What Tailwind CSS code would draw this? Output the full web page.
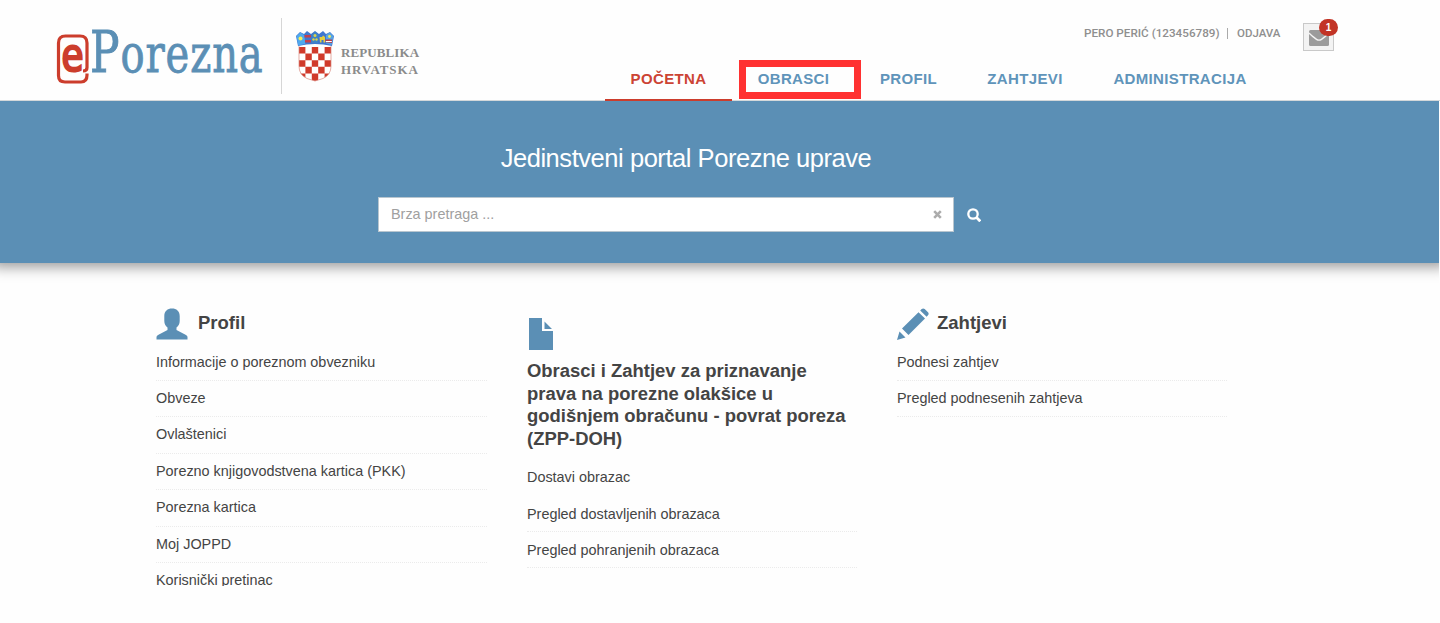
<!DOCTYPE html>
<html lang="hr">

<head>
  <meta charset="UTF-8">
  <meta name="viewport" content="width=device-width, initial-scale=1.0">
  <title>ePorezna</title>
  <script src="https://cdn.jsdelivr.net/npm/@tailwindcss/browser@4"></script>
</head>

<body class="h-[623px] overflow-hidden bg-[#fefefe] font-['Liberation_Sans',Arial,sans-serif] text-[#444]">
  <header class="flex h-[101px] items-start border-b border-[#d4d8da]">
    <!-- Logo -->
    <svg class="ml-[50px] h-[100px] w-[220px] shrink-0" viewBox="50 0 220 100">
      <path d="M87 73.500v1.500q0 7-6 7H65q-6.500 0-6.500-6.500V43q0-7 7-7H80q7 0 7 7v24.500q0 3.500-4 3.500" fill="none" stroke="#cc3d2c" stroke-width="3.200" />
      <text transform="translate(60.800 71.500) scale(.78 1)" font-family="DejaVu Sans Mono" font-weight="bold" font-size="50" fill="#cc3d2c">e</text>
      <text transform="translate(90 71.500) scale(.77 1)" font-family="DejaVu Serif" fill="#5b8fb5" stroke="#5b8fb5" stroke-width=".9" letter-spacing="1.200"><tspan font-size="57">P</tspan><tspan font-size="52">orezna</tspan></text>
    </svg>
    <div class="mt-[18px] ml-[11px] h-[76px] w-px shrink-0 bg-[#d6d6d6]"></div>
    <!-- Grb -->
    <svg class="mt-[30px] ml-[14px] h-[52px] w-[38px] shrink-0" viewBox="296 30 38 52">
      <defs>
        <clipPath id="shield"><path d="M299 46h32v20q0 9-8 12.500l-8 2.500-8-2.500q-8-3.500-8-12.500z" /></clipPath>
      </defs>
      <g clip-path="url(#shield)">
        <path fill="#fff" d="M299 46h32v36h-32z" />
        <path fill="#d03a2b" d="M299 47h6.400v6.600H299zM311.800 47h6.400v6.600h-6.400zM324.600 47h6.400v6.600h-6.400zM305.400 53.600h6.400v6.600h-6.400zM318.200 53.600h6.400v6.600h-6.400zM299 60.200h6.400v6.600H299zM311.800 60.200h6.400v6.600h-6.400zM324.600 60.200h6.400v6.600h-6.400zM305.400 66.800h6.400v6.600h-6.400zM318.200 66.800h6.400v6.600h-6.400zM299 73.400h6.400V80H299zM311.800 73.400h6.400V82h-6.400zM324.600 73.400h6.400V80h-6.400z" />
      </g>
      <path d="M299 46v20q0 9 8 12.500l8 2.500 8-2.500q8-3.500 8-12.500V46" fill="none" stroke="#d9897f" stroke-width=".7" />
      <path d="M296 36l4-4 4 2 3-3 4 3 4-3 4 3 4-3 3 3 4-2 4 4-2 10q-17-4-34 0z" fill="#3f77cf" />
      <path d="M296.500 36l3.800-3.500 4 2.500 1 9-7 1.500z" fill="#4fa8ee" />
      <circle cx="300.500" cy="38.500" r="2" fill="#f4ee58" />
      <path d="M304.500 35h6.500v2.500h-6.500zM305 40h6v2.500h-6z" fill="#c5404c" />
      <path d="M311.500 34.500l3.500-3 3.500 3-.5 8.500h-6z" fill="#3d83c9" />
      <circle cx="315" cy="35.500" r="1.500" fill="#d8d34e" /><circle cx="313.500" cy="39.500" r="1.200" fill="#d8d34e" /><circle cx="316.500" cy="39.500" r="1.200" fill="#d8d34e" />
      <path d="M319.500 37h2.500l1-1.500 2 1.500v5.500h-1.500V40h-2v2.500H320z" fill="#e5cf3d" />
      <path d="M326 35l3.700-2.500 3.800 3.500-2 9-5.500-1.500z" fill="#57a3e5" />
      <path d="M325.500 39.500h6.500v3.500l-6.500-.8z" fill="#b6404b" />
      <path d="M325.800 41h6v1h-6z" fill="#fff" />
      <circle cx="329.500" cy="36.500" r="1.400" fill="#f4ee58" />
    </svg>
    <div class="mt-[44px] ml-[7px] w-[84px] shrink-0 font-['Liberation_Serif',serif] text-[13px] leading-[17px] font-bold whitespace-nowrap text-[#8b8b8b]">
      <div class="tracking-[0.1px]">REPUBLIKA</div>
      <div class="tracking-[0.9px]">HRVATSKA</div>
    </div>

    <div class="ml-auto flex h-[101px] w-[835px] shrink-0 flex-col justify-between">
      <div class="flex h-[56px] items-start pl-[479px] text-[#8f8f8f]">
        <span class="mt-[26px] w-[137px] font-[Roboto,sans-serif] text-[11.7px] leading-[15px] font-medium whitespace-nowrap">PERO PERIĆ (123456789)</span>
        <span class="mt-[28px] ml-[6px] h-[11px] w-px bg-[#aaa]"></span>
        <span class="mt-[26px] ml-[9px] w-[45px] font-[Roboto,sans-serif] text-[11.5px] leading-[15px] font-medium">ODJAVA</span>
        <div class="relative mt-[23px] ml-[21px] flex h-[28px] w-[31px] items-center justify-center border border-[#c9c9c9] bg-[#f3f3f3]">
          <svg class="mt-px h-[16px] w-[20px]" viewBox="0 0 20 16">
            <rect width="20" height="16" rx="1.500" fill="#9b9b9b" />
            <path d="M0 3q2 2.500 7.500 6.300Q10 11 12.500 9.300 18 5.500 20 3" fill="none" stroke="#f3f3f3" stroke-width="1.400" />
          </svg>
          <span class="absolute -top-[5px] left-[15px] flex h-[17px] w-[19px] items-center justify-center rounded-full bg-[#c23426] text-[10px] font-bold text-white">1</span>
        </div>
      </div>
      <nav class="flex h-[45px] text-[15px] font-bold tracking-[0.35px] text-[#5f94ba]">
        <a class="flex h-[45px] w-[127px] items-center justify-center border-b-2 border-[#cc3d2c] pt-[4px] text-[#cc4434]">POČETNA</a>
        <a class="relative flex h-[45px] w-[123px] items-center justify-center pt-[2px]">OBRASCI
          <span class="absolute top-[4px] left-[7px] h-[39px] w-[122px] border-[7.500px] border-[#ff3131]"></span>
        </a>
        <a class="flex h-[45px] w-[107px] items-center justify-center pt-[2px]">PROFIL</a>
        <a class="flex h-[45px] w-[126px] items-center justify-center pt-[2px]">ZAHTJEVI</a>
        <a class="flex h-[45px] w-[184px] items-center justify-center pt-[2px]">ADMINISTRACIJA</a>
      </nav>
    </div>
  </header>

  <!-- Pretraga -->
  <section class="mr-px h-[162px] bg-[#5b8fb5] pt-[40px] shadow-[0_-4px_13px_8px_rgba(0,0,0,0.4)] [clip-path:inset(0_0_-30px_0)]">
    <h1 class="pr-[67px] text-center text-[25.500px] leading-[34px] tracking-[-0.45px] text-white">Jedinstveni portal Porezne uprave</h1>
    <div class="mt-[22px] ml-[378px] flex items-center">
      <div class="flex h-[35px] w-[576px] items-center justify-between border border-[#b9c6cf] bg-white pr-[11px] pl-3 text-[14.400px] text-[#a0a0a0]">
        <span>Brza pretraga ...</span>
        <svg class="h-[9px] w-[9px]" viewBox="0 0 9 9"><path d="M1.200 1.200l6.600 6.600M7.800 1.200L1.200 7.800" stroke="#acacac" stroke-width="2.600" /></svg>
      </div>
      <svg class="ml-[13px] h-[14px] w-[14px]" viewBox="0 0 14 14" fill="none" stroke="#fff" stroke-width="2.300"><circle cx="6" cy="6" r="4.700" /><path d="M9.300 9.300l4 4" stroke-width="2.800" /></svg>
    </div>
  </section>

  <main class="flex h-[323px] gap-[40px] overflow-hidden pl-[156px] text-[14.400px]">
    <div class="w-[331px] pt-[44px]">
      <h2 class="flex h-[34px] items-center gap-[10px] text-[18.500px] font-bold">
        <svg class="h-[32px] w-[32px]" viewBox="0 0 32 32" fill="#5b8fb5"><path d="M8.300 8C8.300 3 11.500.5 16 .500S23.700 3 23.700 8v5c0 3-1.200 5-3.200 6.500V22L30 27q1.500.8 1.500 2v2.500H.500V29q0-1.200 1.500-2l9.500-5v-2.500C9.500 18 8.300 16 8.300 13z" /></svg>
        <span class="-mt-[2px]">Profil</span>
      </h2>
      <ul class="mt-[1px] leading-[35.400px]">
        <li class="border-b border-dotted border-[#ebebeb] pt-[2.500px]">Informacije o poreznom obvezniku</li>
        <li class="border-b border-dotted border-[#ebebeb]">Obveze</li>
        <li class="border-b border-dotted border-[#ebebeb]">Ovlaštenici</li>
        <li class="border-b border-dotted border-[#ebebeb]">Porezno knjigovodstvena kartica (PKK)</li>
        <li class="border-b border-dotted border-[#ebebeb]">Porezna kartica</li>
        <li class="border-b border-dotted border-[#ebebeb]">Moj JOPPD</li>
        <li>Korisnički pretinac</li>
      </ul>
    </div>
    <div class="w-[330px] pt-[55px]">
      <svg class="ml-[2px] h-[32px] w-[24px]" viewBox="0 0 24 32" fill="#5b8fb5"><path d="M0 0h13v13h11v19H0zM15.500 3.500l7.500 7.500h-7.500z" /></svg>
      <h2 class="mt-[10px] text-[18.450px] leading-[22.700px] font-bold whitespace-nowrap">Obrasci i Zahtjev za priznavanje<br>prava na porezne olakšice u<br>godišnjem obračunu - povrat poreza<br>(ZPP-DOH)</h2>
      <ul class="mt-[8px] leading-[34.300px]">
        <li class="border-b border-transparent pt-[1.500px]">Dostavi obrazac</li>
        <li class="border-b border-dotted border-[#ebebeb] pt-[1px]">Pregled dostavljenih obrazaca</li>
        <li class="border-b border-dotted border-[#ebebeb] pt-[1px]">Pregled pohranjenih obrazaca</li>
      </ul>
    </div>
    <div class="w-[330px] pt-[44px]">
      <h2 class="flex h-[34px] items-center gap-[8px] text-[18.500px] font-bold">
        <svg class="h-[32px] w-[32px]" viewBox="0 0 32 32" fill="#5b8fb5"><path d="M0 32l2.500-8.500 6 6zM5 20.500L21.500 4.200l6.500 6.300L11.500 27zM23.200 2.500l1.500-1.500q1.500-1.200 3 0L31 4.300q1.300 1.500 0 3L29.600 8.800z" /></svg>
        <span class="-mt-[2px]">Zahtjevi</span>
      </h2>
      <ul class="mt-[1px] leading-[35.400px]">
        <li class="border-b border-dotted border-[#ebebeb] pt-[2.500px]">Podnesi zahtjev</li>
        <li class="border-b border-dotted border-[#ebebeb]">Pregled podnesenih zahtjeva</li>
      </ul>
    </div>
  </main>
</body>

</html>
